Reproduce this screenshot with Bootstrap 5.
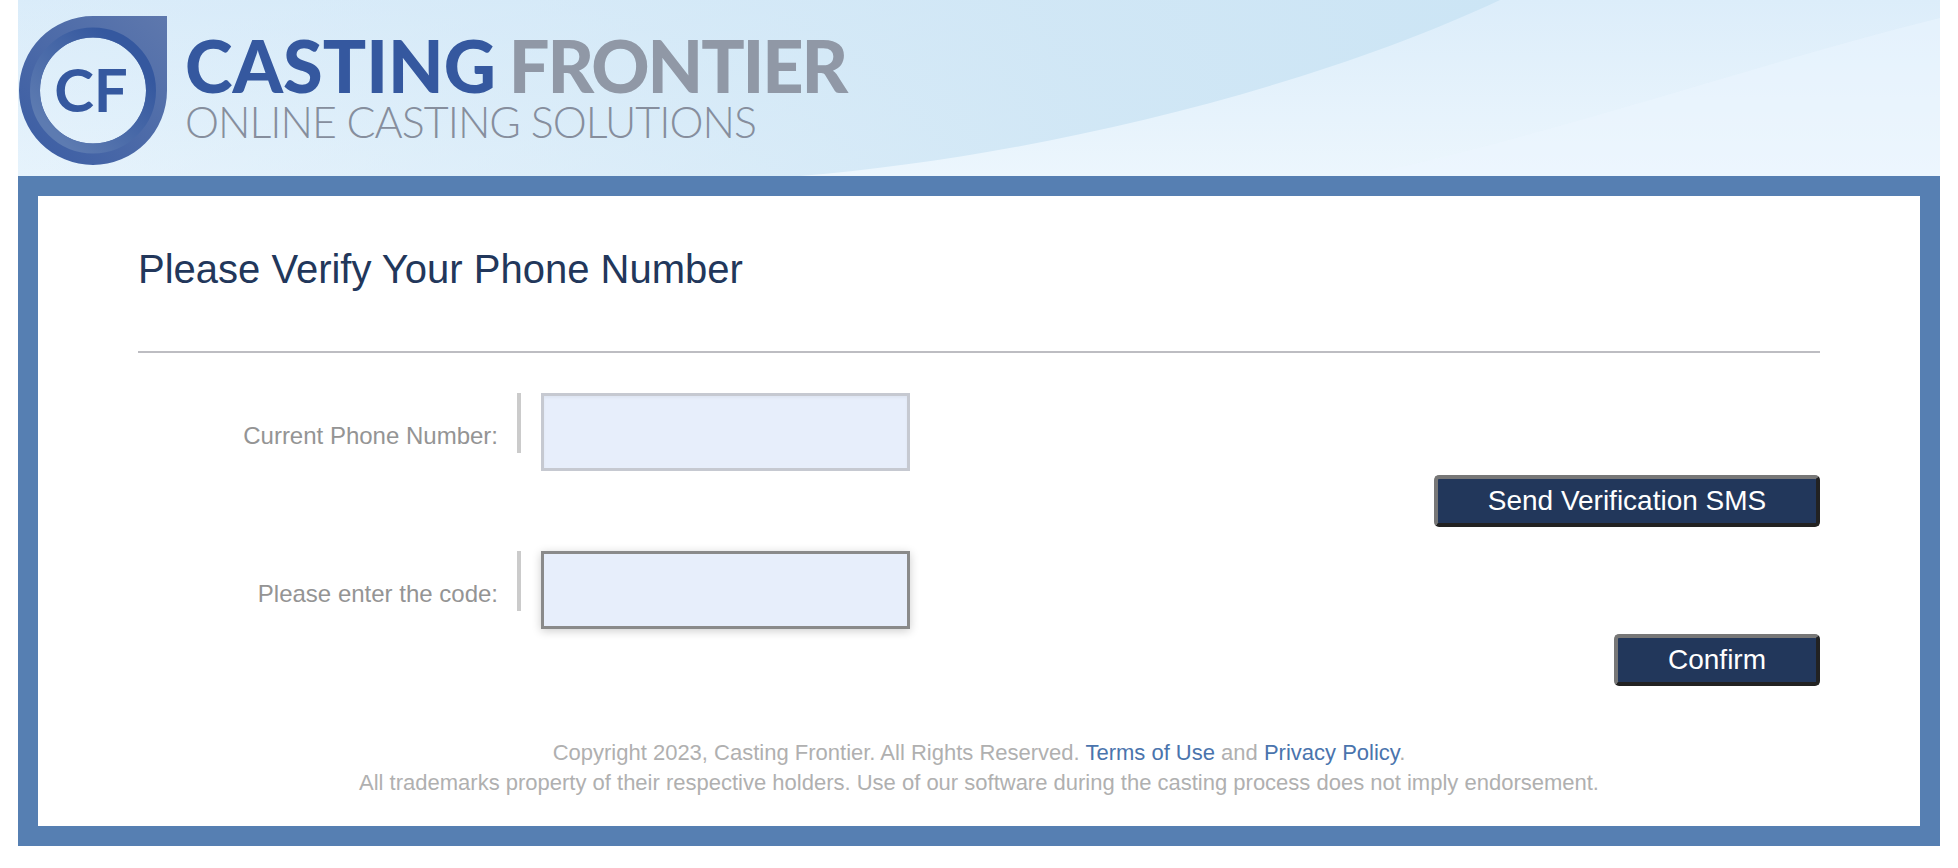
<!DOCTYPE html>
<html lang="en">
<head>
<meta charset="utf-8">
<title>Casting Frontier</title>
<link href="https://cdn.jsdelivr.net/npm/bootstrap@5.3.0/dist/css/bootstrap.min.css" rel="stylesheet">
<style>
html,body{background:#fff;overflow:hidden}
body{font-family:"Liberation Sans",Arial,sans-serif;height:868px}
.cf-shell{margin-left:18px;width:1922px}
.cf-head{height:176px;position:relative;overflow:hidden;background:linear-gradient(180deg,#dcedfa,#ecf6fd)}
.cf-swoosh{position:absolute;inset:0;width:100%;height:100%}
.cf-brand{position:relative;padding:15px 0 0 0}
.cf-words{margin-left:17px;padding-top:15px}
.cf-line1{font-family:Lato,sans-serif;font-weight:900;font-size:72px;line-height:70px;height:70px;white-space:nowrap}
.cf-blue{color:#35589f;letter-spacing:0}
.cf-grey{color:#9098a6;margin-left:13px;letter-spacing:-2.1px}
.cf-line2{font-family:Lato,sans-serif;font-weight:300;font-size:43px;line-height:43px;color:#868e9d;white-space:nowrap;letter-spacing:-1px}
.cf-panel{border:20px solid #567fb2;background:#fff;padding:45px 100px 0;height:670px}
.cf-title{font-size:40px;line-height:54px;font-weight:400;color:#22375b;margin:0;padding-top:1px}
.cf-rule{border:0;border-top:2px solid #bdbdc2;opacity:1;margin:55px 0 40px}
.cf-label{width:360px;padding-top:28px;text-align:right;color:#949494;font-size:24px;line-height:30px}
.cf-bar{width:4px;height:60px;background:#cbcbcb;margin:0 19px}
.cf-input.form-control{width:369px;height:78px;border-radius:0;background:#e7eefb;border:3px solid #c6c9d1;box-shadow:inset 0 2px 3px rgba(0,0,0,.04);margin-left:1px}
.cf-input.cf-active.form-control{border-color:#8a8a8a;box-shadow:0 2px 9px rgba(0,0,0,.2)}
.cf-btn.btn{background:#22375b;color:#fff;font-size:28px;line-height:44px;height:52px;border-style:solid;border-width:4px;border-color:#777 #222 #222 #777;border-radius:5px;padding:0}
.cf-send{width:386px;margin-top:4px}
.cf-confirm{width:206px;margin-top:5px}
.cf-row2{margin-top:24px}
.cf-foot{margin-top:52px;text-align:center;color:#b0b0b0;font-size:22px;line-height:30px}
.cf-foot a{color:#4a74ad;text-decoration:none}
</style>
</head>
<body>
<div class="cf-shell">
  <header class="cf-head">
    <svg class="cf-swoosh" viewBox="0 0 1922 176" preserveAspectRatio="none" aria-hidden="true">
      <defs>
        <linearGradient id="swa" x1="0" y1="0" x2="1" y2="0"><stop offset="0" stop-color="#d4e9f8" stop-opacity=".25"/><stop offset=".7" stop-color="#cfe6f5" stop-opacity=".9"/><stop offset="1" stop-color="#cce5f5"/></linearGradient>
      </defs>
      <path d="M0 0H1482C1290 90 1010 158 782 176H0Z" fill="url(#swa)"/>
      <path d="M1340 176C1520 140 1750 60 1922 18V176Z" fill="#eef7fe" opacity=".45"/>
    </svg>
    <div class="cf-brand d-flex align-items-start">
      <svg width="150" height="151" viewBox="18 15 150 151" aria-label="Casting Frontier logo">
        <defs>
          <linearGradient id="lga" x1="1" y1="0" x2="0" y2="1"><stop offset="0" stop-color="#5e78ad"/><stop offset="1" stop-color="#3a5ca3"/></linearGradient>
          <linearGradient id="lgb" x1="1" y1="0" x2="0" y2="1"><stop offset=".2" stop-color="#35589f"/><stop offset=".85" stop-color="#5d7bb1"/></linearGradient>
        </defs>
        <path fill-rule="evenodd" fill="url(#lga)" d="M93 16H167V90.500A74 74.500 0 1 1 93 16ZM93 37.500A53 53 0 1 0 93 143.500A53 53 0 1 0 93 37.500Z"/>
        <circle cx="93" cy="90.500" r="58" fill="none" stroke="url(#lgb)" stroke-width="10"/>
        <text x="91" y="112" text-anchor="middle" font-family="Lato,sans-serif" font-weight="700" font-size="60" fill="#35589f">CF</text>
      </svg>
      <div class="cf-words">
        <div class="cf-line1 d-flex"><span class="cf-blue d-block">CASTING</span><span class="cf-grey d-block">FRONTIER</span></div>
        <div class="cf-line2">ONLINE CASTING SOLUTIONS</div>
      </div>
    </div>
  </header>
  <main class="cf-panel">
    <h1 class="cf-title">Please Verify Your Phone Number</h1>
    <hr class="cf-rule">
    <form>
      <div class="d-flex align-items-start">
        <label class="cf-label" for="cfPhone">Current Phone Number:</label>
        <span class="cf-bar"></span>
        <input id="cfPhone" class="form-control cf-input" type="text">
      </div>
      <div class="d-flex justify-content-end"><button type="button" class="btn cf-btn cf-send">Send Verification SMS</button></div>
      <div class="d-flex align-items-start cf-row2">
        <label class="cf-label" for="cfCode">Please enter the code:</label>
        <span class="cf-bar"></span>
        <input id="cfCode" class="form-control cf-input cf-active" type="text">
      </div>
      <div class="d-flex justify-content-end"><button type="button" class="btn cf-btn cf-confirm">Confirm</button></div>
    </form>
    <footer class="cf-foot">
      <div>Copyright 2023, Casting Frontier. All Rights Reserved. <a href="#">Terms of Use</a> and <a href="#">Privacy Policy</a>.</div>
      <div>All trademarks property of their respective holders. Use of our software during the casting process does not imply endorsement.</div>
    </footer>
  </main>
</div>
<script src="https://cdn.jsdelivr.net/npm/bootstrap@5.3.0/dist/js/bootstrap.bundle.min.js"></script>
</body>
</html>
